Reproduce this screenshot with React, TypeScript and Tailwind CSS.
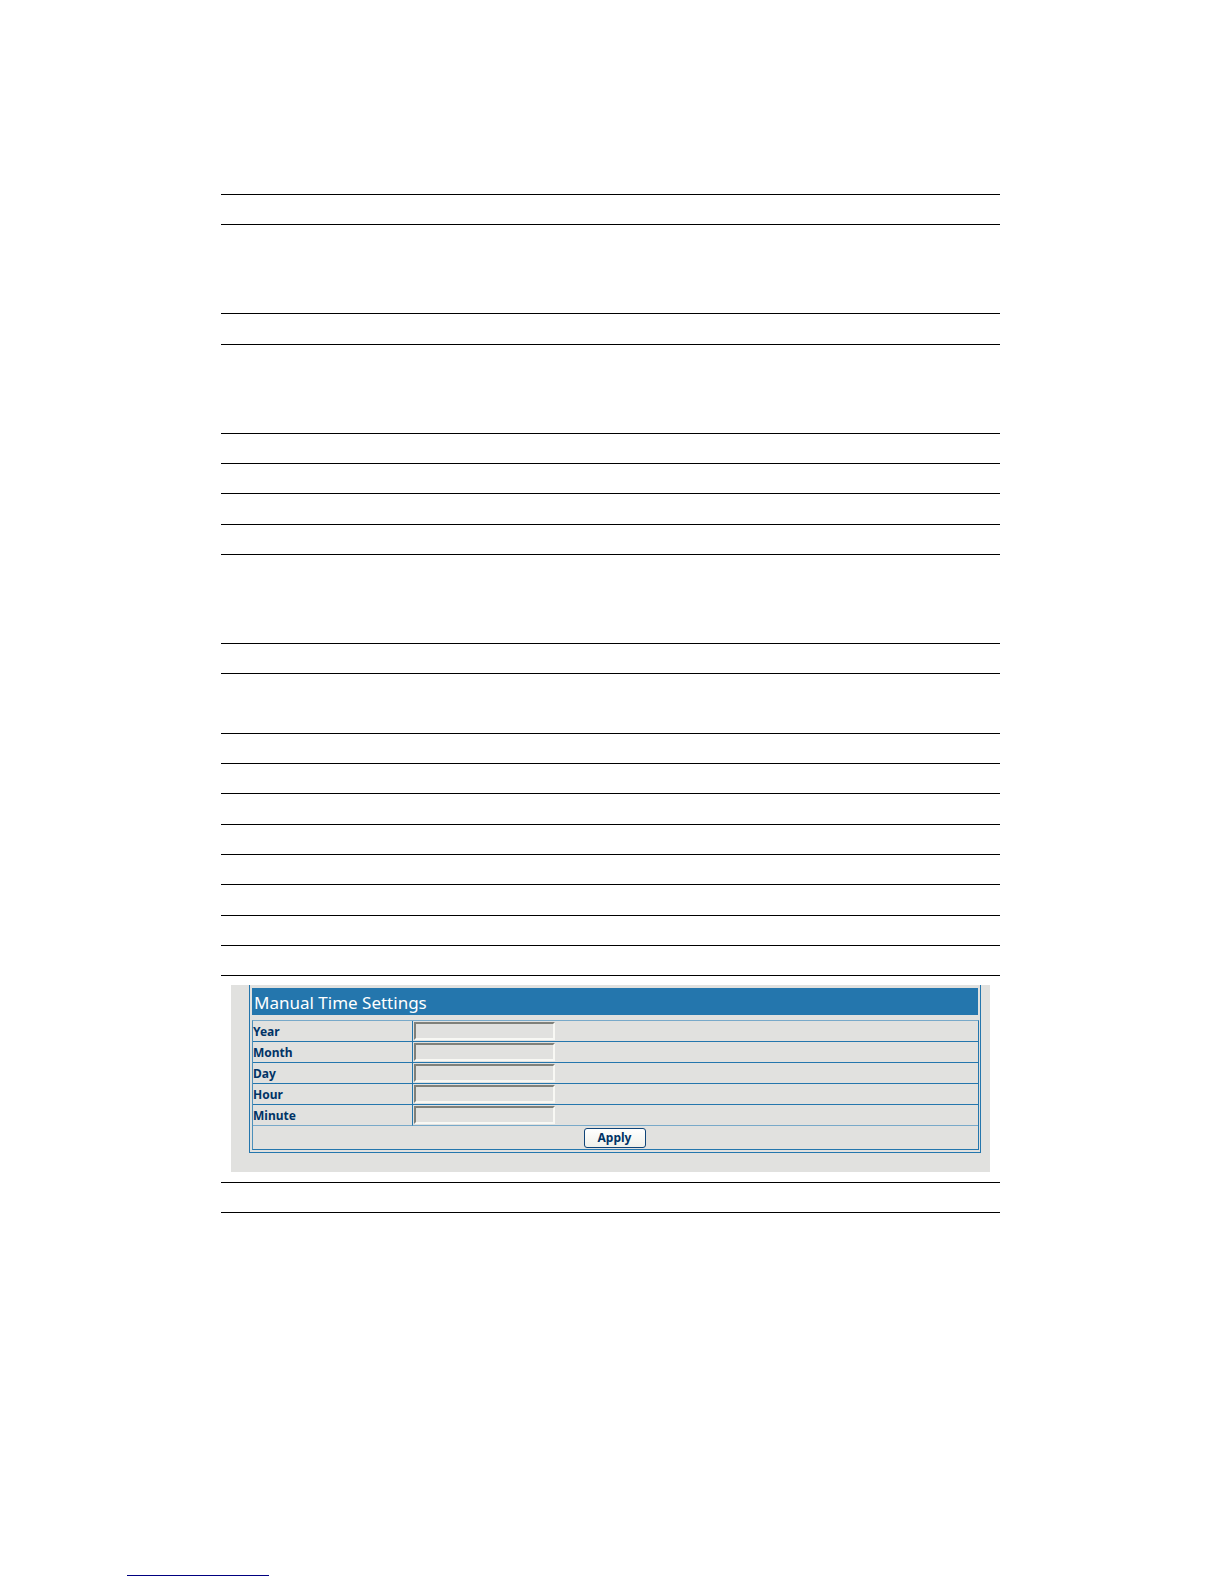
import clsx from 'clsx';

const rulesAbove = [
  'h-[30px]', 'h-[89px]', 'h-[31px]', 'h-[89px]', 'h-[30px]', 'h-[30px]', 'h-[31px]',
  'h-[30px]', 'h-[89px]', 'h-[30px]', 'h-[60px]', 'h-[30px]', 'h-[30px]', 'h-[31px]',
  'h-[30px]', 'h-[30px]', 'h-[31px]', 'h-[30px]', 'h-[30px]',
];

const fields = [
  { id: 'year', label: 'Year' },
  { id: 'month', label: 'Month' },
  { id: 'day', label: 'Day' },
  { id: 'hour', label: 'Hour' },
  { id: 'minute', label: 'Minute' },
];

function ManualTimeSettings() {
  return (
    <form className="bg-[#e1e1df] pl-[18px] pr-[9px] pb-[19px]" onSubmit={(e) => e.preventDefault()}>
      <div className="border border-t-0 border-[#2476ad] pt-[3px] pr-px pb-[2px] pl-[2px]">
        <h2 className="mr-px mb-[5px] h-[27px] bg-[#2476ad] pl-[2px] text-[17px] leading-[29px] text-white">
          Manual Time Settings
        </h2>

        <table className="w-full table-fixed border-separate border-spacing-0 border border-[#2476ad] border-t-[#78a9c9] border-l-[#4b8fba] text-left">
          <colgroup>
            <col className="w-[160px]" />
            <col />
          </colgroup>
          <tbody>
            {fields.map((field, i) => {
              // the rule under the last field is paler than the others
              const line = i === fields.length - 1 ? 'border-b-[#78a9c9]' : 'border-b-[#2476ad]';
              return (
                <tr key={field.id} className="h-[21px]">
                  <th scope="row" className={clsx('border-r border-b border-r-[#2476ad] p-0 text-xs font-bold text-[#003366]', line)}>
                    <label htmlFor={field.id} className="block h-5 leading-[22px]">{field.label}</label>
                  </th>
                  <td className={clsx('h-[21px] border-b p-0 pl-px align-middle', line)}>
                    <input
                      id={field.id}
                      type="text"
                      className="block h-[18px] w-[141px] border-2 border-t-[#7f807a] border-l-[#7f807a] border-r-[#f8f8f4] border-b-[#f8f8f4] bg-[#e1e1df] px-1 text-xs outline-none"
                    />
                  </td>
                </tr>
              );
            })}
            <tr className="h-[23px]">
              <td colSpan={2} className="p-0 pr-[2px]">
                <button
                  type="submit"
                  className="mx-auto block h-5 w-[62px] rounded-[3px] border border-[#0f4478] bg-linear-to-b from-white to-[#f0f0ea] text-xs leading-[18px] font-bold text-[#003366]"
                >
                  Apply
                </button>
              </td>
            </tr>
          </tbody>
        </table>
      </div>
    </form>
  );
}

export default function App() {
  return (
    <div className="bg-white font-['Noto_Sans',sans-serif]">
      <main className="pt-[194px] pr-[224px] pl-[221px]">
        <div className="border-t border-black">
          {rulesAbove.map((height, i) => (
            <div key={i} className={clsx('border-b border-black', height)} />
          ))}
          <div className="border-b border-black px-[10px] pt-[9px] pb-[10px]">
            <ManualTimeSettings />
          </div>
          <div className="h-[30px] border-b border-black" />
        </div>
      </main>
      <footer className="pt-[362px] pb-2 pl-[127px]">
        <div className="w-[142px] border-b border-[#000080]" />
      </footer>
    </div>
  );
}
